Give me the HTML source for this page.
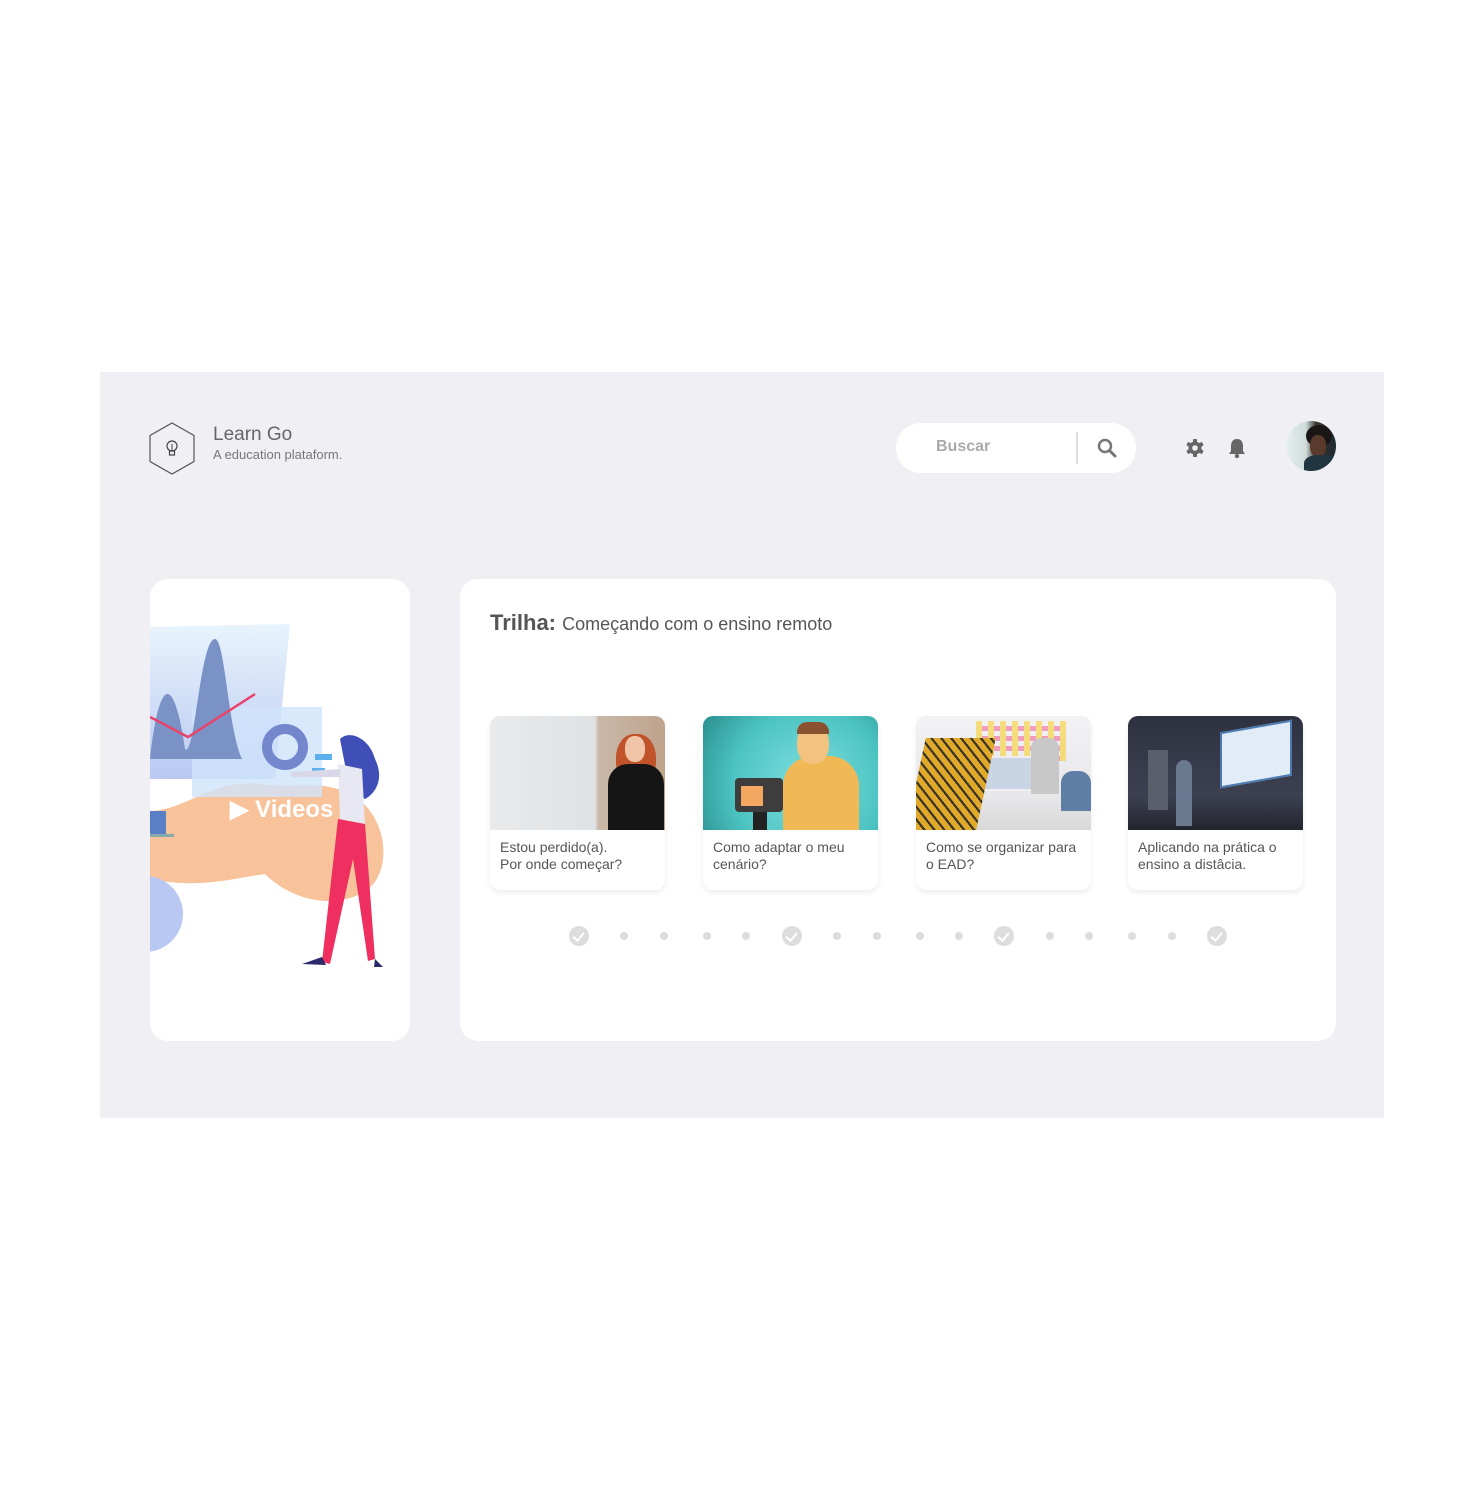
<!DOCTYPE html>
<html><head><meta charset="utf-8"><style>
*{margin:0;padding:0;box-sizing:border-box}
body{width:1484px;height:1488px;background:#fff;font-family:"Liberation Sans",Roboto,sans-serif;position:relative;overflow:hidden}
.panel{position:absolute;left:100px;top:372px;width:1284px;height:746px;background:#f0f0f4}
.abs{position:absolute}
.card{position:absolute;background:#fff;border-radius:18px}
.th{position:absolute;top:716px;width:175px;height:174px;background:#fff;border-radius:10px;overflow:hidden;box-shadow:0 3px 6px rgba(0,0,0,.07)}
.th .img{height:114px;position:relative;overflow:hidden}
.th p{font-size:14px;color:#555;line-height:17px;padding:9px 10px}
.dot{position:absolute;width:8px;height:8px;border-radius:50%;background:#ddd;top:932px}
.chk{position:absolute;width:20px;height:20px;border-radius:50%;background:#ddd;top:926px}
.chk:after{content:"";position:absolute;left:6px;top:4px;width:5px;height:9px;border:solid #fff;border-width:0 2.5px 2.5px 0;transform:rotate(40deg)}
</style></head><body>
<div class="panel"></div>
<svg class="abs" style="left:148px;top:422px" width="48" height="54" viewBox="0 0 48 54"><polygon points="24,1 46,13.5 46,39.5 24,52 2,39.5 2,13.5" fill="none" stroke="#555" stroke-width="1.2"/><circle cx="24" cy="24" r="5" fill="none" stroke="#444" stroke-width="1.2"/><rect x="21.5" y="29" width="5" height="4" fill="none" stroke="#444" stroke-width="1.2"/><line x1="24" y1="22" x2="24" y2="29" stroke="#444"/></svg>
<div class="abs" style="left:213px;top:424px;font-size:19px;color:#666">Learn Go</div>
<div class="abs" style="left:213px;top:447px;font-size:13px;color:#777">A education plataform.</div>
<div class="abs" style="left:896px;top:423px;width:240px;height:50px;background:#fff;border-radius:25px"></div>
<div class="abs" style="left:936px;top:438px;font-size:16px;font-weight:bold;color:#aaa">Buscar</div>
<div class="abs" style="left:1076px;top:432px;width:2px;height:32px;background:#ddd"></div>
<svg class="abs" style="left:1097px;top:438px" width="20" height="20" viewBox="0 0 20 20"><circle cx="8" cy="8" r="6" fill="none" stroke="#777" stroke-width="2.5"/><line x1="12.5" y1="12.5" x2="18" y2="18" stroke="#777" stroke-width="3" stroke-linecap="round"/></svg>
<svg class="abs" style="left:1185px;top:438px" width="20" height="20" viewBox="0 0 20 20"><g fill="#666"><circle cx="10" cy="10" r="6.5"/><rect x="8" y="1" width="4" height="18" rx="1"/><rect x="8" y="1" width="4" height="18" rx="1" transform="rotate(60 10 10)"/><rect x="8" y="1" width="4" height="18" rx="1" transform="rotate(120 10 10)"/></g><circle cx="10" cy="10" r="2.8" fill="#f0f0f4"/></svg>
<svg class="abs" style="left:1228px;top:437px" width="18" height="22" viewBox="0 0 18 22"><path d="M9 2c-4 0-6 3-6 7v5l-2 3h16l-2-3V9c0-4-2-7-6-7z" fill="#666"/><circle cx="9" cy="19" r="2.2" fill="#666"/></svg>
<div class="abs" style="left:1286px;top:421px;width:50px;height:50px;border-radius:50%;overflow:hidden;background:linear-gradient(90deg,#e6efee 0%,#cfdcd9 40%,#3a3330 60%,#1e2a30 100%)"><div style="position:absolute;left:20px;top:4px;width:26px;height:22px;border-radius:50%;background:#1a1615"></div><div style="position:absolute;left:24px;top:14px;width:16px;height:22px;border-radius:45%;background:#5a3a2c"></div><div style="position:absolute;left:18px;top:34px;width:34px;height:20px;background:#213540;border-radius:40% 40% 0 0"></div></div>

<div class="card" style="left:150px;top:579px;width:260px;height:462px;overflow:hidden">
<svg width="260" height="462" viewBox="0 0 260 462">
<defs><linearGradient id="sc" x1="0" y1="0" x2="0" y2="1"><stop offset="0" stop-color="#e8f4fc"/><stop offset="1" stop-color="#b9c8f2"/></linearGradient></defs>
<path d="M0 232 C40 230 60 200 110 205 C150 210 170 200 200 215 C240 235 245 300 210 315 C180 330 140 320 115 295 C80 300 50 310 0 300Z" fill="#f8c29a"/>
<circle cx="-5" cy="335" r="38" fill="#b9c8f2"/>
<polygon points="0,48 140,45 125,200 0,200" fill="url(#sc)"/>
<rect x="42" y="128" width="130" height="90" fill="#d0e4fb" opacity=".8"/>
<path d="M0 180 C10 90 25 100 35 170 C45 180 50 60 65 60 C75 60 78 150 92 180Z" fill="#7b92c6"/>
<polyline points="0,138 38,158 105,115" fill="none" stroke="#e8436a" stroke-width="2.5"/>
<circle cx="135" cy="168" r="18" fill="none" stroke="#7486cc" stroke-width="10"/>
<rect x="165" y="175" width="17" height="6" fill="#5eb0ea"/><rect x="162" y="189" width="13" height="6" fill="#5eb0ea"/>
<rect x="0" y="232" width="16" height="25" fill="#5b7fc7"/><rect x="0" y="255" width="24" height="3" fill="#8aa"/>
<path d="M190 160 C200 150 220 160 225 180 C235 200 225 215 215 220 L200 212Z" fill="#3f4fb7"/>
<path d="M188 185 L212 190 L215 245 L190 240Z" fill="#e8e8f2"/>
<path d="M140 193 L190 190 L190 198 L142 198Z" fill="#d8d8e8"/>
<path d="M188 240 L215 245 L225 380 L218 382 L203 280 L180 385 L172 383 Z" fill="#ef2f5f"/>
<path d="M152 385 L172 378 L176 386 Z M225 380 L233 388 L224 388Z" fill="#2a2a6a"/>
</svg>
<div class="abs" style="left:80px;top:216px;color:#fff;font-weight:bold;font-size:24px;font-family:'Liberation Sans',sans-serif">&#9654; Videos</div>
</div>

<div class="card" style="left:460px;top:579px;width:876px;height:462px"></div>
<div class="abs" style="left:490px;top:610px;font-size:22px;color:#555"><b>Trilha:</b> <span style="font-size:18px">Começando com o ensino remoto</span></div>

<div class="th" style="left:490px"><div class="img" style="background:linear-gradient(90deg,#e8eaec 0%,#dfe2e4 60%,#c9b8a8 62%,#bfa38c 100%)"><div style="position:absolute;left:126px;top:18px;width:40px;height:52px;border-radius:45%;background:#c0532a"></div><div style="position:absolute;left:135px;top:20px;width:20px;height:26px;border-radius:45%;background:#f0c4a6"></div><div style="position:absolute;left:118px;top:48px;width:56px;height:70px;border-radius:20px 20px 0 0;background:#151515"></div></div><p>Estou perdido(a).<br>Por onde começar?</p></div>
<div class="th" style="left:703px"><div class="img" style="background:radial-gradient(circle at 60% 60%,#7fe0e0,#4cc4c2 60%,#2a8f8e)"><div style="position:absolute;left:80px;top:40px;width:76px;height:80px;border-radius:30px 30px 0 0;background:#f0b956"></div><div style="position:absolute;left:94px;top:8px;width:32px;height:40px;border-radius:45%;background:#f3c27e"></div><div style="position:absolute;left:94px;top:6px;width:32px;height:12px;border-radius:10px 10px 0 0;background:#8a5230"></div><div style="position:absolute;left:32px;top:62px;width:48px;height:34px;border-radius:4px;background:#3d3d3d"></div><div style="position:absolute;left:38px;top:70px;width:22px;height:20px;background:#f3a760"></div><div style="position:absolute;left:50px;top:96px;width:14px;height:18px;background:#222"></div></div><p>Como adaptar o meu<br>cenário?</p></div>
<div class="th" style="left:916px"><div class="img" style="background:linear-gradient(180deg,#f2f2f4 0%,#e8e8ea 70%,#d8d8d8 100%)"><div style="position:absolute;left:60px;top:5px;width:90px;height:40px;background:repeating-linear-gradient(90deg,#f7d34a 0 6px,transparent 6px 12px),repeating-linear-gradient(0deg,#f07aa8 0 5px,transparent 5px 10px);opacity:.7"></div><div style="position:absolute;left:65px;top:40px;width:58px;height:35px;background:#c9d4e4;border:2px solid #eee"></div><div style="position:absolute;left:0;top:22px;width:70px;height:92px;background:repeating-linear-gradient(45deg,#e0a92a 0 5px,#3a3426 5px 7px);transform:skewX(-12deg)"></div><div style="position:absolute;left:115px;top:22px;width:28px;height:56px;background:#c8c8c8;border-radius:10px 10px 0 0"></div><div style="position:absolute;left:145px;top:55px;width:30px;height:40px;background:#5e7ea6;border-radius:12px 12px 0 0"></div></div><p>Como se organizar para<br>o EAD?</p></div>
<div class="th" style="left:1128px"><div class="img" style="background:linear-gradient(180deg,#2d3140,#3c4050 70%,#23252e)"><div style="position:absolute;left:92px;top:10px;width:72px;height:56px;background:#e2ecf6;transform:skewY(-10deg);border:2px solid #4a7ab0"></div><div style="position:absolute;left:48px;top:44px;width:16px;height:66px;background:#6a7890;border-radius:8px 8px 0 0"></div><div style="position:absolute;left:20px;top:34px;width:20px;height:60px;background:#5a5f6c"></div></div><p>Aplicando na prática o<br>ensino a distâcia.</p></div>

<div class="chk" style="left:569px"></div><div class="dot" style="left:620px"></div><div class="dot" style="left:660px"></div><div class="dot" style="left:703px"></div><div class="dot" style="left:742px"></div>
<div class="chk" style="left:782px"></div><div class="dot" style="left:833px"></div><div class="dot" style="left:873px"></div><div class="dot" style="left:916px"></div><div class="dot" style="left:955px"></div>
<div class="chk" style="left:994px"></div><div class="dot" style="left:1046px"></div><div class="dot" style="left:1085px"></div><div class="dot" style="left:1128px"></div><div class="dot" style="left:1168px"></div>
<div class="chk" style="left:1207px"></div>
</body></html>
